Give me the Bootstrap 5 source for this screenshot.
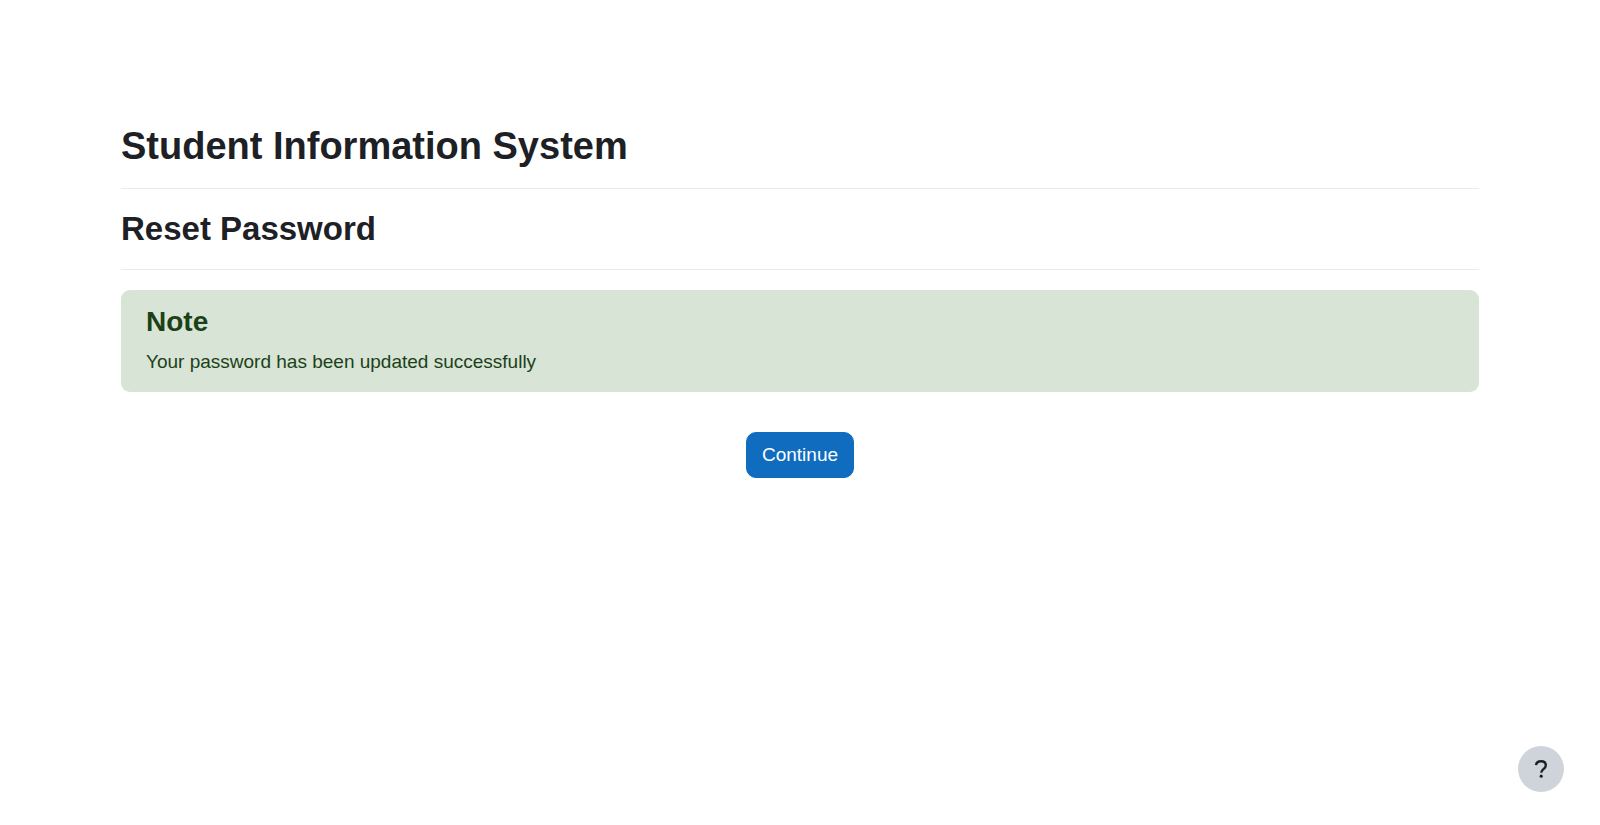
<!DOCTYPE html>
<html lang="en">
<head>
<meta charset="utf-8">
<meta name="viewport" content="width=device-width, initial-scale=1">
<title>Reset Password</title>
<link href="https://cdn.jsdelivr.net/npm/bootstrap@5.3.0/dist/css/bootstrap.min.css" rel="stylesheet">
<style>
body{font-family:"Liberation Sans",Arial,sans-serif;font-size:19px;line-height:28px;color:#1d2125}
.page{padding:124px 121px 24px}
h1,h2,h3{font-weight:700}
h1{font-size:38px;line-height:44px}
h2{font-size:33px;line-height:40px}
h3{font-size:28px;line-height:36px}
.rule{margin:20px 0;border-top:1px solid #dee2e6;opacity:.7}
.note{background:#d7e4d6;color:#1c4119;border-radius:9px;padding:14px 25px 16px}
.btn-go{--bs-btn-bg:#0f6cbf;--bs-btn-border-color:#0f6cbf;font-size:19px;line-height:28px;padding:8px 15px;border-radius:10px}
.help{right:36px;bottom:33px;width:46px;height:46px;background:#ced4da;color:#1d2125}
</style>
</head>
<body>
<main class="page">
<h1 class="mb-0">Student Information System</h1>
<hr class="rule">
<h2 class="mb-0">Reset Password</h2>
<hr class="rule">
<section class="note">
<h3 class="mb-2">Note</h3>
<p class="mb-0">Your password has been updated successfully</p>
</section>
<div class="d-flex justify-content-center mt-4 pt-3">
<button type="button" class="btn btn-primary btn-go">Continue</button>
</div>
</main>
<button type="button" class="help position-fixed border-0 rounded-circle p-0 d-flex align-items-center justify-content-center" aria-label="Help">
<svg width="14" height="20" viewBox="0 0 14 20" fill="none" stroke="currentColor" stroke-width="2.4"><path d="M2 6.200C2.300 3.700 4.200 2.200 7 2.200C9.900 2.200 11.800 3.800 11.800 6.200C11.800 8 10.900 9 9.500 10.100C8 11.300 7.200 11.900 7.200 13.800"/><circle cx="7.200" cy="17.200" r="1.600" fill="currentColor" stroke="none"/></svg>
</button>
<script src="https://cdn.jsdelivr.net/npm/bootstrap@5.3.0/dist/js/bootstrap.bundle.min.js"></script>
</body>
</html>
